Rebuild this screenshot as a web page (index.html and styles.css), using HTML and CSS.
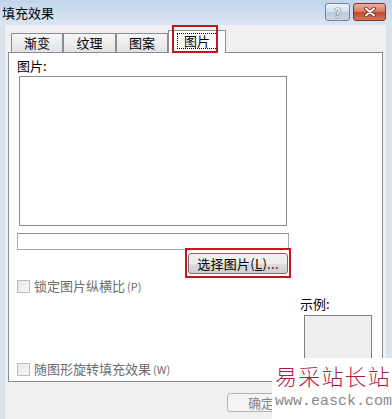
FILE: index.html
```html
<!DOCTYPE html>
<html lang="zh-CN">
<head>
  <meta charset="UTF-8">
  <title>填充效果</title>
  <link rel="stylesheet" href="styles.css">
</head>
<body>
  <div class="window">
    <div class="titlebar">
      <span class="title">填充效果</span>
      <div class="caption-btns">
        <span class="cap-btn help">?</span>
        <span class="cap-btn close">
          <svg width="14" height="10" viewBox="0 0 14 10">
            <path d="M3 1.5 L11 8.5 M11 1.5 L3 8.5" stroke="#6b2418" stroke-width="3.6" stroke-linecap="round"/>
            <path d="M3 1.5 L11 8.5 M11 1.5 L3 8.5" stroke="#fff" stroke-width="2" stroke-linecap="round"/>
          </svg>
        </span>
      </div>
    </div>
    <div class="client">
      <div class="tabs">
        <div class="tab">渐变</div>
        <div class="tab wide">纹理</div>
        <div class="tab">图案</div>
        <div class="tab active"><span class="focus">图片</span></div>
      </div>
      <div class="panel">
        <div class="label">图片:</div>
        <div class="picture"></div>
        <div class="file-row">
          <div class="field"></div>
          <button class="btn pick">选择图片(<u>L</u>)...</button>
        </div>
        <label class="check first"><span class="box"></span>锁定图片纵横比<span class="key">(P)</span></label>
        <div class="lower">
          <label class="check second"><span class="box"></span>随图形旋转填充效果<span class="key">(W)</span></label>
          <div class="sample">
            <div class="label">示例:</div>
            <div class="sample-box"></div>
          </div>
        </div>
      </div>
      <div class="actions">
        <button class="btn ok">确定</button>
      </div>
    </div>

    <!-- красные рамки-пометки поверх скриншота -->
    <div class="mark mark-tab"></div>
    <div class="mark mark-btn"></div>

    <div class="watermark">
      <div class="wm-name">易采站长站</div>
      <div class="wm-url">www.easck.com</div>
    </div>
  </div>
</body>
</html>
```

FILE: styles.css
```css
body {
  margin: 0;
  width: 392px;
  height: 419px;
  overflow: hidden;
  background: #d9e3ef;
  font-family: "Noto Sans CJK SC", "Liberation Sans", sans-serif;
  font-size: 13px;
  color: #000;
}
.window {
  position: relative;
  height: 419px;
  display: flex;
  flex-direction: column;
}
.titlebar {
  height: 25px;
  display: flex;
  background: linear-gradient(#c2d5eb, #dae5f3);
}
.title {
  padding-left: 2px;
  line-height: 25px;
}
.caption-btns {
  margin-left: auto;
  margin-top: 3px;
  margin-right: 6px;
  display: flex;
  gap: 3px;
}
.cap-btn {
  box-sizing: border-box;
  height: 18px;
  border-radius: 3px;
  display: flex;
  align-items: center;
  justify-content: center;
}
.help {
  width: 25px;
  border: 1px solid #72839b;
  background: linear-gradient(#eef3f9, #d3deeb 50%, #bccbdf 51%, #c9d6e6);
  color: #f6f8fb;
  font-weight: bold;
  font-size: 13px;
  text-shadow: 0 0 1px #2d3a4d, 0 0 1px #2d3a4d;
}
.close {
  width: 33px;
  border: 1px solid #7d3326;
  background: linear-gradient(#eab0a2, #d7775f 50%, #c4442b 51%, #d4795b);
}
.client {
  flex: 1;
  margin: 0 6px 0 5px;
  padding: 5px 3px 0 3px;
  background: #f0f0f0;
}
.tabs {
  display: flex;
  align-items: flex-end;
  height: 22px;
  padding-left: 3px;
}
.tab {
  box-sizing: border-box;
  width: 52px;
  height: 19px;
  border: 1px solid #898c95;
  border-bottom: none;
  background: linear-gradient(#f7f7f7, #e2e2e2);
  text-align: center;
  line-height: 18px;
}
.tab.wide {
  width: 53px;
}
.tab.active {
  position: relative;
  width: 58px;
  height: 23px;
  margin-bottom: -1px;
  background: #fff;
  padding-top: 2px;
  line-height: 14px;
}
.focus {
  display: inline-block;
  box-sizing: border-box;
  width: 41px;
  height: 16px;
  border: 1px dotted #000;
}
.panel {
  box-sizing: border-box;
  height: 330px;
  border: 1px solid #898c95;
  background: #fff;
  padding: 0 8px;
  display: flex;
  flex-direction: column;
}
.label {
  margin-top: 5px;
  line-height: 15px;
}
.picture {
  box-sizing: border-box;
  margin-top: 3px;
  margin-left: 2px;
  width: 268px;
  height: 150px;
  border: 1px solid #8a8a8a;
}
.file-row {
  margin-top: 7px;
  width: 272px;
  display: flex;
  flex-direction: column;
  align-items: flex-end;
}
.field {
  box-sizing: border-box;
  width: 100%;
  height: 17px;
  border: 1px solid #a8a8a8;
  border-top-color: #8e8e8e;
}
.btn {
  box-sizing: border-box;
  height: 21px;
  padding: 0;
  border: 1px solid #707070;
  border-radius: 3px;
  background: linear-gradient(#f2f2f2, #ebebeb 50%, #dddddd 51%, #cfcfcf);
  font-family: inherit;
  font-size: 13px;
  line-height: 18px;
  color: #000;
}
.pick {
  margin-top: 3px;
  margin-right: 1px;
  width: 100px;
  letter-spacing: 0.3px;
}
.check {
  display: flex;
  align-items: center;
  height: 14px;
  color: #6d6d6d;
  line-height: 14px;
}
.check.first {
  margin-top: 5px;
}
.box {
  box-sizing: border-box;
  width: 13px;
  height: 13px;
  margin-right: 4px;
  border: 1px solid #bdbdbd;
  background: linear-gradient(135deg, #e6e6e6, #f8f8f8);
}
.key {
  font-size: 11px;
  margin-left: 2px;
}
.lower {
  flex: 1;
  display: flex;
}
.check.second {
  align-self: flex-end;
  margin-bottom: 5px;
}
.sample {
  margin-left: auto;
  margin-right: 2px;
  width: 72px;
}
.sample .label {
  margin-top: 3px;
}
.sample-box {
  box-sizing: border-box;
  margin-top: 4px;
  margin-left: 4px;
  width: 68px;
  height: 60px;
  border: 1px solid #808080;
  background: #efefef;
}
.actions {
  margin-top: 11px;
  padding-left: 219px;
  display: flex;
}
.actions .btn {
  width: 75px;
  height: 19px;
  padding-right: 7px;
  line-height: 16px;
  border-color: #adb2b5;
  background: #f4f4f4;
  color: #838383;
}
.mark {
  position: absolute;
  box-sizing: border-box;
  border: 2px solid #c5161d;
}
.mark-tab {
  left: 172px;
  top: 25px;
  width: 46px;
  height: 28px;
}
.mark-btn {
  left: 185px;
  top: 248px;
  width: 106px;
  height: 30px;
}
.watermark {
  position: absolute;
  left: 272px;
  top: 358px;
  width: 120px;
  height: 61px;
  background: #fff;
  padding-left: 3px;
  box-sizing: border-box;
}
.wm-name {
  margin-top: 4px;
  font-size: 22px;
  line-height: 26px;
  letter-spacing: 1.2px;
  color: #b8173f;
  font-weight: 300;
  white-space: nowrap;
}
.wm-url {
  margin-top: 6px;
  font-family: "Liberation Mono", monospace;
  font-size: 15px;
  line-height: 16px;
  color: #8a8a8a;
  white-space: nowrap;
}
```
